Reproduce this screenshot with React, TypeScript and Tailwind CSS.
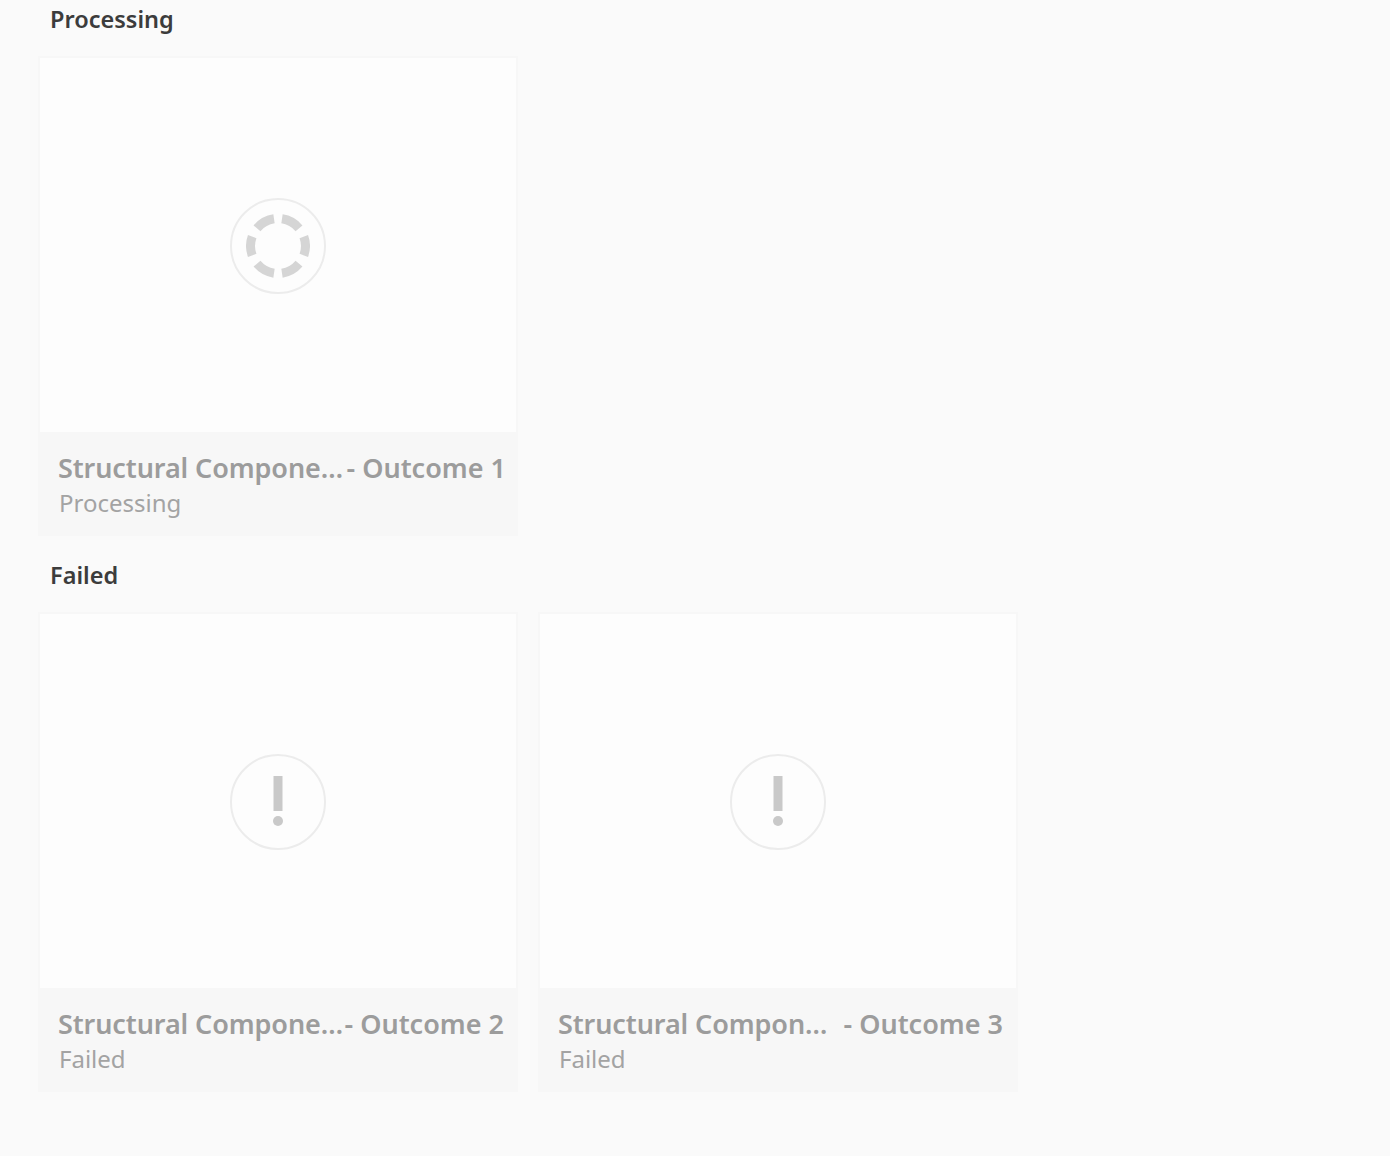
import React from 'react';

interface OutcomeCardProps {
  name: string;
  outcome: string;
  status: string;
  captionPadding: string;
  icon: React.ReactNode;
}

const SpinnerIcon = () => (
  <svg width="64" height="64" viewBox="0 0 64 64" fill="none">
    <g stroke="#d5d5d5" strokeWidth="9">
      <path d="M28 4.8A27.5 27.5 0 0 0 11 14.3" />
      <path d="M36 4.8A27.5 27.5 0 0 1 53 14.3" />
      <path d="M57.8 22.6A27.5 27.5 0 0 1 57.8 41.4" />
      <path d="M53 49.7A27.5 27.5 0 0 1 36 59.2" />
      <path d="M28 59.2A27.5 27.5 0 0 1 11 49.7" />
      <path d="M6.2 41.4A27.5 27.5 0 0 1 6.2 22.6" />
    </g>
  </svg>
);

const AlertIcon = () => (
  <svg width="12" height="52" viewBox="0 0 12 52" fill="none">
    <rect x="1.5" y="0" width="9" height="35" fill="#c9c9c9" />
    <circle cx="6" cy="45" r="5" fill="#c9c9c9" />
  </svg>
);

const OutcomeCard: React.FC<OutcomeCardProps> = ({ name, outcome, status, captionPadding, icon }) => {
  return (
    <div className="w-[480px] h-[480px] flex flex-col bg-[#f7f7f7]">
      {/* Thumbnail */}
      <div className="h-[374px] mx-[2px] mt-[2px] pt-[2px] bg-[#fdfdfd] flex items-center justify-center">
        <div className="w-[96px] h-[96px] rounded-full border-2 border-[#ececec] flex items-center justify-center">
          {icon}
        </div>
      </div>

      {/* Caption */}
      <div className={`flex-1 pl-[20px] pt-[18px] ${captionPadding}`}>
        <div className="flex items-center justify-between whitespace-nowrap text-[27px] leading-[36px] font-semibold text-[#9c9c9c]">
          <span className="tracking-[-0.1px]">{name}</span>
          <span>- {outcome}</span>
        </div>
        <div className="ml-px text-[24px] leading-[34px] text-[#a3a3a3]">{status}</div>
      </div>
    </div>
  );
};

export default function App() {
  return (
    <div
      className="min-h-screen bg-[#fafafa] pl-[38px]"
      style={{ fontFamily: '"Noto Sans", "Open Sans", sans-serif' }}
    >
      <section className="mb-[20px]">
        <h2 className="h-[56px] pt-[3px] pl-[12px] text-[23.5px] leading-[32px] font-semibold text-[#3c3c3c]">Processing</h2>
        <OutcomeCard
          name="Structural Compone…"
          outcome="Outcome 1"
          status="Processing"
          captionPadding="pr-[12px]"
          icon={<SpinnerIcon />}
        />
      </section>

      <section>
        <h2 className="h-[56px] pt-[3px] pl-[12px] text-[23.5px] leading-[32px] font-semibold text-[#3c3c3c]">Failed</h2>
        <div className="flex gap-[20px]">
          <OutcomeCard
            name="Structural Compone…"
            outcome="Outcome 2"
            status="Failed"
            captionPadding="pr-[14px]"
            icon={<AlertIcon />}
          />
          <OutcomeCard
            name="Structural Compon…"
            outcome="Outcome 3"
            status="Failed"
            captionPadding="pr-[15px]"
            icon={<AlertIcon />}
          />
        </div>
      </section>
    </div>
  );
}
